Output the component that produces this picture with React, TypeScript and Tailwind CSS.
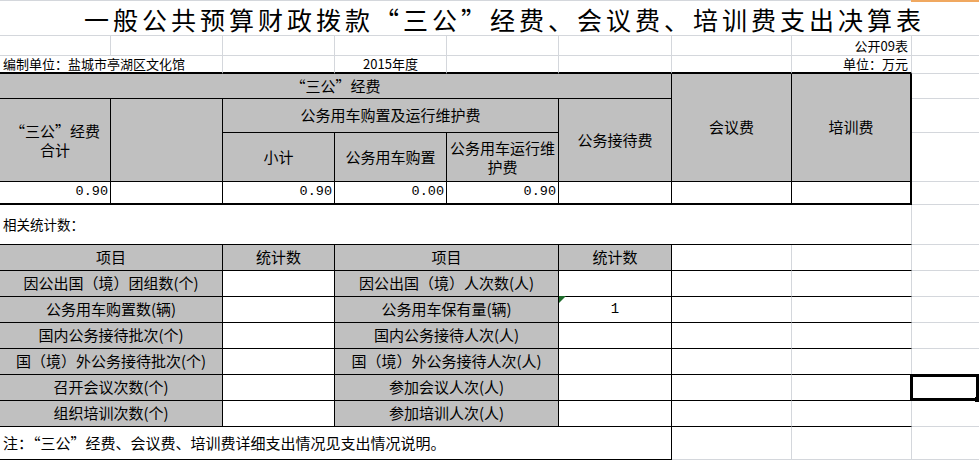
import type { ReactNode } from 'react';

const cjk = { fontFamily: '"Noto Sans CJK SC", "Liberation Sans", sans-serif' };
const mono = { fontFamily: '"Liberation Mono", "Noto Sans CJK SC", monospace' };

function Cell({ className = '', children, style }: { className?: string; children?: ReactNode; style?: React.CSSProperties }) {
  return (
    <div className={`flex items-center whitespace-nowrap ${className}`} style={style}>
      {children}
    </div>
  );
}

const statRows: [string, string, string, string][] = [
  ['因公出国（境）团组数(个)', '', '因公出国（境）人次数(人)', ''],
  ['公务用车购置数(辆)', '', '公务用车保有量(辆)', '1'],
  ['国内公务接待批次(个)', '', '国内公务接待人次(人)', ''],
  ['国（境）外公务接待批次(个)', '', '国（境）外公务接待人次(人)', ''],
  ['召开会议次数(个)', '', '参加会议人次(人)', ''],
  ['组织培训次数(个)', '', '参加培训人次(人)', ''],
];

const rowStarts = ['row-start-10', 'row-start-11', 'row-start-12', 'row-start-13', 'row-start-14', 'row-start-15'];

export default function App() {
  const gray = 'bg-[#c0c0c0]';
  const blk = 'border-black';
  const lt = 'border-[#d4d7dc]';

  return (
    <div
      lang="zh-CN"
      className="w-[979px] h-[461px] overflow-hidden bg-white text-black grid grid-cols-[111px_112px_112px_112px_112px_113px_120px_120px_67px] grid-rows-[36px_20px_18px_25px_34px_49px_23px_40px_26px_26px_26px_26px_26px_26px_26px_33px_1px]"
      style={cjk}
    >
      {/* title */}
      <Cell className={`col-start-1 col-span-9 row-start-1 relative items-end pl-[84px] border-t border-b ${lt} text-[25px] tracking-[4px] leading-[32px]`}>
        <div className="absolute left-[911px] right-0 -top-px h-[2px] bg-[#f0a860]" />
        一般公共预算财政拨款“三公”经费、会议费、培训费支出决算表
      </Cell>

      {/* row 2 */}
      {['col-start-1', 'col-start-2', 'col-start-3', 'col-start-4', 'col-start-5', 'col-start-6', 'col-start-7'].map(c => (
        <Cell key={c} className={`${c} row-start-2 border-r border-b ${lt}`} />
      ))}
      <Cell className={`col-start-8 row-start-2 border-r border-b ${lt} justify-end pr-[3px] text-[13px] leading-[16px]`}>公开09表</Cell>
      <Cell className={`col-start-9 row-start-2 border-b ${lt}`} />

      {/* row 3 */}
      <Cell className={`col-start-1 col-span-2 row-start-3 border-r ${lt} border-b-2 border-b-black pl-[3px] text-[13px]`}>编制单位：盐城市亭湖区文化馆</Cell>
      <Cell className={`col-start-3 row-start-3 border-r ${lt} border-b-2 border-b-black`} />
      <Cell className={`col-start-4 row-start-3 border-r ${lt} border-b-2 border-b-black justify-center text-[13px]`}>2015年度</Cell>
      <Cell className={`col-start-5 row-start-3 border-r ${lt} border-b-2 border-b-black`} />
      <Cell className={`col-start-6 row-start-3 border-r ${lt} border-b-2 border-b-black`} />
      <Cell className={`col-start-7 row-start-3 border-r ${lt} border-b-2 border-b-black`} />
      <Cell className={`col-start-8 row-start-3 border-r ${lt} border-b-2 border-b-black justify-end pr-[3px] text-[13px]`}>单位：万元</Cell>
      <Cell className={`col-start-9 row-start-3 border-b ${lt}`} />

      {/* header */}
      <Cell className={`col-start-1 col-span-6 row-start-4 ${gray} border-r border-b ${blk} justify-center text-[15px]`}>“三公”经费</Cell>
      <Cell className={`col-start-7 row-start-4 row-span-3 ${gray} border-r border-b ${blk} justify-center text-[15px]`}>会议费</Cell>
      <Cell className={`col-start-8 row-start-4 row-span-3 ${gray} border-r-2 border-b ${blk} justify-center text-[15px]`}>培训费</Cell>
      <Cell className={`col-start-9 row-start-4 border-b ${lt}`} />

      <Cell className={`col-start-1 row-start-5 row-span-2 ${gray} border-r border-b ${blk} justify-center text-center text-[15px] leading-[19px]`}>
        <span>“三公”经费<br />合计</span>
      </Cell>
      <Cell className={`col-start-2 row-start-5 row-span-2 ${gray} border-r border-b ${blk}`} />
      <Cell className={`col-start-3 col-span-3 row-start-5 ${gray} border-r border-b ${blk} justify-center text-[15px]`}>公务用车购置及运行维护费</Cell>
      <Cell className={`col-start-6 row-start-5 row-span-2 ${gray} border-r border-b ${blk} justify-center text-[15px]`}>公务接待费</Cell>
      <Cell className={`col-start-9 row-start-5 border-b ${lt}`} />

      <Cell className={`col-start-3 row-start-6 ${gray} border-r border-b ${blk} justify-center text-[15px]`}>小计</Cell>
      <Cell className={`col-start-4 row-start-6 ${gray} border-r border-b ${blk} justify-center text-[15px]`}>公务用车购置</Cell>
      <Cell className={`col-start-5 row-start-6 ${gray} border-r border-b ${blk} justify-center text-center text-[15px] leading-[19px]`}>
        <span>公务用车运行维<br />护费</span>
      </Cell>
      <Cell className={`col-start-9 row-start-6 border-b ${lt}`} />

      {/* data row */}
      <Cell className={`col-start-1 row-start-7 border-r border-b-2 ${blk} justify-end pr-[2px] text-[13.5px]`} style={mono}>0.90</Cell>
      <Cell className={`col-start-2 row-start-7 border-r border-b-2 ${blk}`} />
      <Cell className={`col-start-3 row-start-7 border-r border-b-2 ${blk} justify-end pr-[2px] text-[13.5px]`} style={mono}>0.90</Cell>
      <Cell className={`col-start-4 row-start-7 border-r border-b-2 ${blk} justify-end pr-[2px] text-[13.5px]`} style={mono}>0.00</Cell>
      <Cell className={`col-start-5 row-start-7 border-r border-b-2 ${blk} justify-end pr-[2px] text-[13.5px]`} style={mono}>0.90</Cell>
      <Cell className={`col-start-6 row-start-7 border-r border-b-2 ${blk}`} />
      <Cell className={`col-start-7 row-start-7 border-r border-b-2 ${blk}`} />
      <Cell className={`col-start-8 row-start-7 border-r-2 border-b-2 ${blk}`} />
      <Cell className={`col-start-9 row-start-7 border-b ${lt}`} />

      {/* related stats label */}
      <Cell className={`col-start-1 col-span-8 row-start-8 border-r ${lt} border-b border-b-black pl-[3px] text-[13.5px]`}>相关统计数：</Cell>
      <Cell className={`col-start-9 row-start-8 border-b ${lt}`} />

      {/* stat header */}
      <Cell className={`col-start-1 col-span-2 row-start-9 ${gray} border-r border-b ${blk} justify-center text-[15px]`}>项目</Cell>
      <Cell className={`col-start-3 row-start-9 ${gray} border-r border-b ${blk} justify-center text-[15px]`}>统计数</Cell>
      <Cell className={`col-start-4 col-span-2 row-start-9 ${gray} border-r border-b ${blk} justify-center text-[15px]`}>项目</Cell>
      <Cell className={`col-start-6 row-start-9 ${gray} border-r border-b ${blk} justify-center text-[15px]`}>统计数</Cell>
      <Cell className={`col-start-7 row-start-9 border-r ${lt} border-b border-b-black`} />
      <Cell className={`col-start-8 row-start-9 border-r ${lt} border-b border-b-black`} />
      <Cell className={`col-start-9 row-start-9 border-b ${lt}`} />

      {statRows.map((r, i) => {
        const rs = rowStarts[i];
        return [
          <Cell key={`a${i}`} className={`col-start-1 col-span-2 ${rs} ${gray} border-r border-b ${blk} justify-center text-[15px]`}>{r[0]}</Cell>,
          <Cell key={`b${i}`} className={`col-start-3 ${rs} border-r border-b ${blk} justify-center text-[15px]`}>{r[1]}</Cell>,
          <Cell key={`c${i}`} className={`col-start-4 col-span-2 ${rs} ${gray} border-r border-b ${blk} justify-center text-[15px]`}>{r[2]}</Cell>,
          <Cell key={`d${i}`} className={`col-start-6 ${rs} relative border-r border-b ${blk} justify-center text-[14px]`} style={mono}>
            {i === 1 && (
              <svg className="absolute left-0 -top-px" width="7" height="7" viewBox="0 0 7 7">
                <polygon points="0,0 7,0 0,7" fill="#1d6b2a" />
              </svg>
            )}
            {r[3]}
          </Cell>,
          <Cell key={`e${i}`} className={`col-start-7 ${rs} border-r ${lt} border-b border-b-black`} />,
          <Cell key={`f${i}`} className={`col-start-8 ${rs} border-r ${lt} border-b border-b-black`} />,
          <Cell key={`g${i}`} className={`col-start-9 ${rs} relative border-b ${lt}`}>
            {i === 4 && (
              <div className="absolute -left-[2px] -top-[1px] right-0 -bottom-[1px] border-[3px] border-black">
                <div className="absolute -right-[4px] -bottom-[4px] w-[5px] h-[5px] bg-black" />
              </div>
            )}
          </Cell>,
        ];
      })}

      {/* note */}
      <Cell className={`col-start-1 col-span-6 row-start-16 border-r border-b ${blk} pl-[3px] text-[15px]`}>注：“三公”经费、会议费、培训费详细支出情况见支出情况说明。</Cell>
      <Cell className={`col-start-7 row-start-16 border-r border-b ${lt}`} />
      <Cell className={`col-start-8 row-start-16 border-r border-b ${lt}`} />
      <Cell className={`col-start-9 row-start-16 border-b ${lt}`} />
    </div>
  );
}
